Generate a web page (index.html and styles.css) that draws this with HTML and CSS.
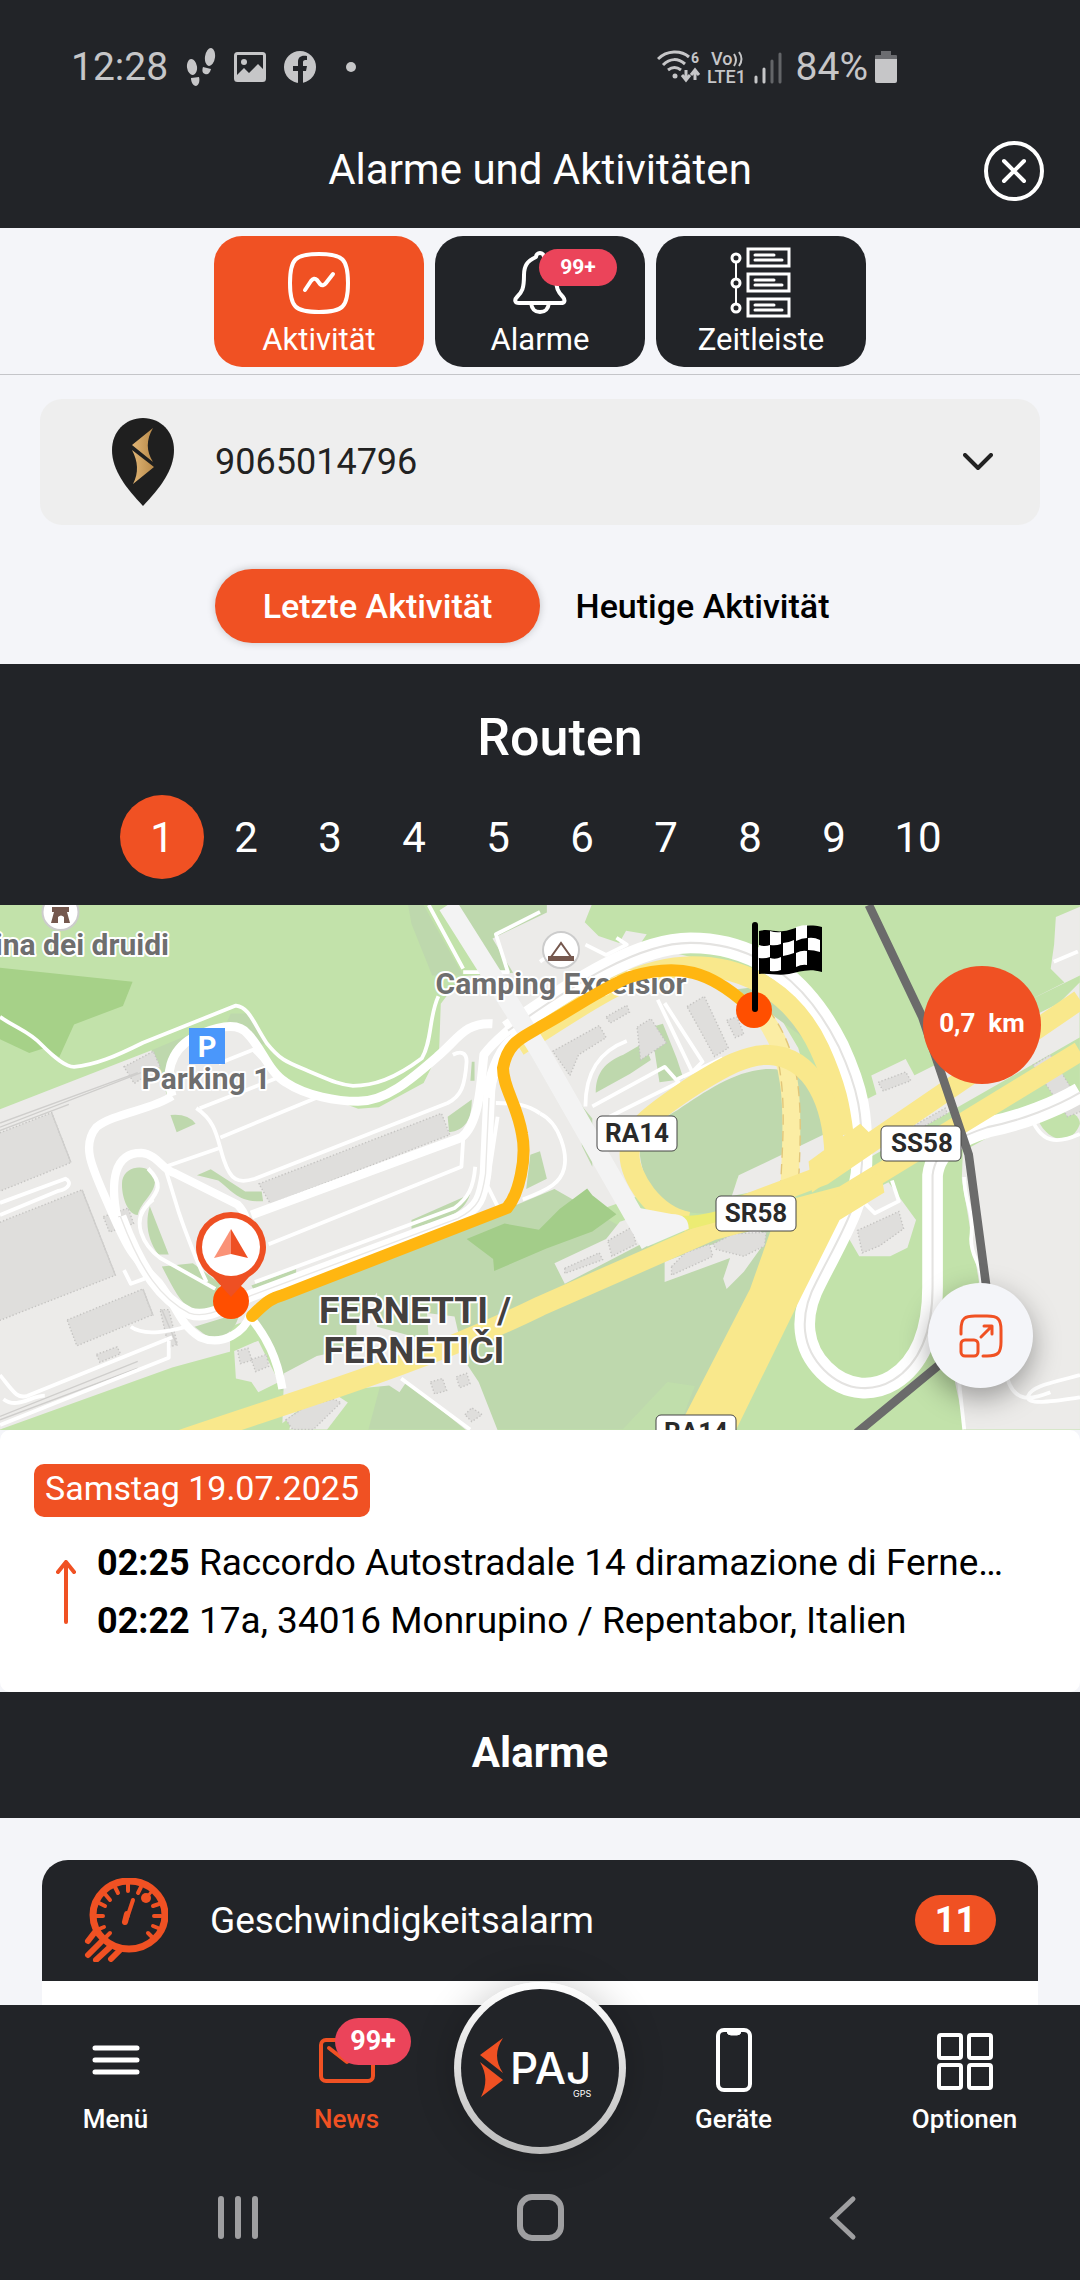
FILE: index.html
```html
<!DOCTYPE html>
<html lang="de">
<head>
<meta charset="utf-8">
<meta name="viewport" content="width=device-width, initial-scale=1">
<title>Alarme und Aktivitäten</title>
<link rel="stylesheet" href="styles.css">
</head>
<body>
<div class="status">
  <div class="status-group">
    <span class="clock">12:28</span>
    <svg class="ic-steps" viewBox="0 0 30 38" width="30" height="38" fill="currentColor"><ellipse cx="6" cy="19" rx="5" ry="8" transform="rotate(-8 6 19)"/><path d="M5 30l8-1c1 4 0 8-3 9-3 0-5-4-5-8z"/><ellipse cx="24" cy="9" rx="5" ry="9" transform="rotate(8 24 9)"/><path d="M17 19l8 2c-1 4-3 6-6 5s-3-4-2-7z"/></svg>
    <svg class="ic-photo" viewBox="0 0 32 32" width="32" height="32"><rect x="1.500" y="2.500" width="29" height="27" rx="2" fill="none" stroke="currentColor" stroke-width="3"/><circle cx="10" cy="11" r="3" fill="currentColor"/><path d="M2 30V25l8-8 5 5 9-9 7 7v10z" fill="currentColor"/></svg>
    <svg viewBox="0 0 32 32" width="32" height="32"><circle cx="16" cy="16" r="16" fill="currentColor"/><path d="M14 32V20h-5v-5h5v-4c0-5 3-7 9-6v4c-3 0-4 0-4 3v3h4l-1 5h-3v12z" fill="#222428"/></svg>
    <span class="dot"></span>
  </div>
  <div class="status-group status-right">
    <svg viewBox="0 0 126 40" width="126" height="40">
      <g transform="translate(0 3)">
      <g fill="none" stroke="currentColor" stroke-width="3"><path d="M1 9C10 0 24 0 32 7M6 15c7-7 15-7 22-1M11 20c4-3 9-3 13 0"/><path d="M29 20v9m-4-4l4 5 4-5M38 30v-9m-4 4l4-5 4 5" stroke-width="3"/></g>
      <circle cx="18" cy="26" r="2.500" fill="currentColor"/>
      <text class="tiny" x="34" y="13">6</text>
      <text class="micro" x="54" y="15">Vo</text><text class="micro" x="50" y="33">LTE1</text>
      <path d="M77 4q4 6 0 12M82 2q5 7 0 14" fill="none" stroke="currentColor" stroke-width="2"/>
      <g stroke="currentColor" stroke-width="3" stroke-linecap="round"><path d="M99 27v5M107 19v13"/><path d="M115 11v21M123 4v28" opacity=".4"/></g>
      </g>
    </svg>
    <span class="clock">84%</span>
    <svg viewBox="0 0 22 34" width="22" height="34" fill="currentColor"><path d="M0 9V6q0-1 1-1h5V1h10v4h5q1 0 1 1v3z" opacity=".45"/><path d="M0 9h22v22q0 2-2 2H2q-2 0-2-2z"/></svg>
  </div>
</div>

<header class="header">
  <h1>Alarme und Aktivitäten</h1>
  <button class="close" aria-label="Schließen"><svg viewBox="0 0 60 60" width="60" height="60" fill="none" stroke="currentColor" stroke-linecap="round"><circle cx="30" cy="30" r="28" stroke-width="4"/><path d="M20 20l20 20M40 20L20 40" stroke-width="4"/></svg></button>
</header>

<main class="main">
  <div class="tabs">
    <button class="tab active">
      <svg viewBox="0 0 72 72" width="72" height="72" fill="none" stroke="currentColor" stroke-width="4" stroke-linecap="round" stroke-linejoin="round"><path d="M7 36C7 12 12 7 36 7s29 5 29 29-5 29-29 29S7 60 7 36z"/><path d="M22 43l6-9q3-4 6-1l3 4q3 3 6-1l7-9"/></svg>
      <span>Aktivität</span>
    </button>
    <button class="tab">
      <svg viewBox="0 0 72 72" width="72" height="72" fill="none" stroke="currentColor" stroke-width="4" stroke-linejoin="round"><path d="M32 10a4 4 0 0 1 8 0c9 4 12 9 12 18 0 14 2 17 7 22 3 4 1 6-2 6H15c-4 0-5-3-2-6 5-5 7-8 7-22 0-9 3-14 12-18z"/><path d="M27 56c1 7 4 9 9 9s8-2 9-9"/></svg>
      <span>Alarme</span>
      <span class="badge">99+</span>
    </button>
    <button class="tab">
      <svg viewBox="0 0 72 72" width="72" height="72" fill="none" stroke="currentColor" stroke-width="3"><path d="M23 2h41v17H23zM23 27h41v17H23zM23 52h41v17H23z"/><path d="M30 8h19M30 13h27M30 33h19M30 38h27M30 58h19M30 63h27" stroke-linecap="round"/><circle cx="11" cy="11" r="4"/><circle cx="11" cy="36" r="4"/><circle cx="11" cy="61" r="4"/><path d="M11 15v17M11 40v17" stroke-width="2"/></svg>
      <span>Zeitleiste</span>
    </button>
  </div>

  <div class="filters">
    <div class="device">
      <svg viewBox="0 0 64 88" width="64" height="88"><defs><linearGradient id="gold"><stop offset="0" stop-color="#e0b575"/><stop offset="1" stop-color="#b98a4a"/></linearGradient></defs><path d="M32 0C14 0 1 14 1 32c0 20 14 38 31 56 17-18 31-36 31-56C63 14 50 0 32 0z" fill="#1f1f1f"/><path d="M42 10L21 27l21 17c-7-11-7-22 0-34z" fill="url(#gold)"/><path d="M21 32l22 17-21 17c6-11 5-23-1-34z" fill="url(#gold)"/></svg>
      <select aria-label="Gerät"><option>9065014796</option></select>
      <svg class="chevron" viewBox="0 0 30 18" width="30" height="18" fill="none" stroke="#222" stroke-width="4" stroke-linecap="round" stroke-linejoin="round"><path d="M2 2l13 13L28 2"/></svg>
    </div>
    <div class="segment">
      <button class="seg on">Letzte Aktivität</button>
      <button class="seg">Heutige Aktivität</button>
    </div>
  </div>

  <section class="routes">
    <h2>Routen</h2>
    <div class="pages">
      <button class="page on">1</button><button class="page">2</button><button class="page">3</button><button class="page">4</button><button class="page">5</button><button class="page">6</button><button class="page">7</button><button class="page">8</button><button class="page">9</button><button class="page">10</button>
    </div>
  </section>

  <section class="map">
    <svg class="map-art" viewBox="0 0 1080 525" preserveAspectRatio="xMidYMid slice">
      <g transform="scale(.34437) translate(0 -15)">
        <rect y="15" width="3136" height="1530" fill="#c2e2aa"/>
        <path d="M1185 15l10 55 60 150h90L1230 15zM1320 15h300v200h-200zM670 330h50l60 90-150 0zM440 437l120-50 0 60-80 120z" fill="#bed8ad"/>
        <path d="M0 197l385 41-28 70-142 54-43 95-42-27-45 15-85-40z" fill="#a6d188"/>
        <!-- built-up land -->
        <path d="M0 608L440 437l45 130 20-120 60-60 110-30 60 40 90 130 215 80 60-5 130-70 45-90 5-140 60-80 150-10-60-100 158-75V15h130l-20 50 40 40 60 20 20-35 60 10-20 30 330 80 130 220 60 220-300 130-560 200-90-30-760 290v100l-210 70-30 30L0 1538z" fill="#ecebe9"/>
        <!-- lower woodland -->
        <path d="M735 1215l65-65 690-260 120-50 300 170 340-130-40 240-220 418H1070l-20-100-230 20-20-120z" fill="#bed8ad"/>
        <path d="M1070 1538l40-150-310 40-80-130-220 60L0 1538z" fill="#c2e2aa"/>
        <path d="M1808 1538l130-138 80 12-50 126z" fill="#c2e2aa" opacity=".6"/>
        <path d="M1355 985l110-45 100 18 60-60 80-60 15 20 70 55-70 50-135 50-150 65-3-35z" fill="#a3cd89"/>
        <path d="M680 1310l70-30 60 120-60 30-20-30-45-10zM825 1375l95-50 115-25V1220l60-80v100l150 40-5-80 80 10 30 130 40 60 60 153h-80L1180 1400l-20 30-30-20-200 20-110 90z" fill="#ecebe9"/>
        <path d="M850 1500l80-50 50-10 30 20-60 78h-110z" fill="#ecebe9"/>
        <!-- green islands -->
        <g fill="#bed8ad">
          <path d="M495 625q50-5 73 25l-55 25zM355 815c10-50 90-50 95 0 0 40-40 60-50 100-30 0-50-60-45-100zM435 890l55 140-30 0c-30-40-40-90-25-140zM470 1065l90-10 80 60-20 70-60 5c-40-20-60-70-90-125zM572 800l40-18 100 65 48 0 4 28c-70 5-90-30-130-60zM1300 630l70-50c0 60-20 90-66 95zM1370 470l8 0 0 55-12 0zM1195 930l170-75c-20 60-70 70-170 100zM730 1120l130-48v12l-120 55zM565 1240l130-40c-10 60-60 80-90 70z"/>
          <path d="M1540 740l28-10 20 80-60 30zM1730 560c0-60 30-90 80-110l60-35 20 50-60 40zM1890 370l35-10 40 100 20 60-70 10zM1670 575l50 60 0 140-30-60zM2300 240c80 70 100 160 120 260l-100-110-180-130z"/>
        </g>
        <path d="M1858 740c0-60 40-90 110-130 120-80 260-180 400-70l30 150-170 80-90 40-10 70-60 30c-130 10-200-70-210-170z" fill="#bed8ad"/>
        <path d="M2125 860l20-60 250-120 20-50 660-330 60-60v160l-700 400z" fill="#ecebe9"/>
        <path d="M2530 510l100-48 40 75-120 45zM2480 870l100-50 80 110-25 80-50 25h-90l-35-60zM3136 20l-70 30-5 80-10 70 40 40-120 60 165-80z" fill="#ecebe9"/>
        <path d="M3136 590l-230 80-110 60-3 80 50 300-60 100-10 190 30 138h333z" fill="#ecebe9"/>
        <path d="M3015 640c60-60 121-20 121 10-20 60-90 60-121-10z" fill="#c2e2aa"/>
        <path d="M1610 1055l150-70 40-50 60-20 30 70-250 130zM1930 1050l280-100 0 60-50 70-50 50-10-30 20-60-190 70z" fill="#ecebe9"/>
        <!-- buildings -->
        <g fill="#dfdedc" stroke="#c5c4c2" stroke-width="4" stroke-dasharray="4 6">
          <path d="M-10 680l160-62 56 145L-10 850zM-10 940l248-98 97 248-345 135zM360 485l85-45 20 45-75 48zM752 825l530-205 24 62-520 202zM195 1220l220-90 28 75-220 90zM300 920l72-25 16 45-70 25zM280 1320l60-22 10 20-60 25zM465 1190l25 0 25 100-25 10zM690 1310l30-8 12 35-34 10zM730 1335l44-15 6 35-38 15zM1250 1400l35-10 12 35-35 10zM1325 1385l30-10 10 30-30 12zM1350 1495l20-20 30 20-30 20zM830 1510l60-40 80-20 20 10-80 78h-60z"/>
          <path d="M1605 440l135-75 20 35-80 50-25 60zM1760 340l60-34 8 20-56 32zM1850 370l40-25 45 70-75 50zM1995 310l50-30 70 150-40 25zM2110 350l30-10 20 50-25 10zM2550 530l80-30 15 25-80 30zM2490 960l120-55 14 50-70 50-50 20zM1640 1070l100-45 10 20-110 40zM1765 990l70-40 12 50-70 35zM1950 1065l40-40 70-25 10 35-120 55zM2070 1000l60-30 95-5-5 40-60 30-80-20zM2655 655l90-50 6 15-90 50zM3000 480l50-30 100 160-50 20z"/>
        </g>
        <!-- railway tracks -->
        <g fill="none" stroke="#cfcecc" stroke-width="4"><path d="M0 660l410-158M0 648l400-146M0 670l200-76M0 1500l400-160M0 1510l400-150M0 1525l390-155M150 618l56 145M238 842l97 248M415 1130l30 78M470 1190l45 105"/></g>
        <!-- minor streets -->
        <g fill="none" stroke="#fff" stroke-width="11" stroke-linejoin="round">
          <path d="M0 340C60 380 80 380 120 420s70 65 95 65c60-5 120-30 200-70l270-108c40 5 50 50 90 110 40 50 60 55 120 80s90 40 130 43c60 0 120-20 200-80 30-50 20-120 48-180"/>
          <path d="M1245 15l100 185M1345 210h130l-35-110 128-65M0 880l190-70c20 10 10 30-20 35L0 915"/>
          <path d="M580 605l230-90-75-80-100 40M640 690l290-120M480 775l160-55M570 605c60 40 60 90 80 150 20 60 40 70 90 55l560-220c40-20 50-50 55-120 0-30-20-30-40-20"/>
          <path d="M780 1000l560-225 5-80M740 1110l580-215c40-30 55-60 60-120M480 780l40 130c20 60 60 160 80 200M445 870c-80 60-20 140 20 170l160 90M380 1240c40 30 120 10 160 0M0 1380c40 50 50 70 80 60l420-170M10 1450c40 30 80-10 120-10M490 1280v50L0 1525M360 1075l20 40 40-15M1445 630l-30 200 30 60M1440 590c60 0 90 5 128 30"/>
          <path d="M1165 1390l200 148M1568 180l40-30M1700 130l60 30 60-30-30-20M1568 440v-5M1700 600c0-100 40-160 120-190M1720 600l210-115 40 45-200 100M1930 300l110 170-30 30-100-210M1968 520l130-60M1568 620c60 30 80 120 70 160s-40 60-120 90M2800 805c0 80 30 90 20 180 0 60 30 60 30 130M2785 1400l15 138M3136 1380c-70 20-140 30-150 60s80 15 150 5M2920 1370c20 100 80 80 130 60M2500 870l40 40 70-35-20-60M2990 620c30 90 80 90 146 60M3060 180l70-30"/>
        </g>
        <!-- truck stop roads -->
        <g fill="none" stroke="#fff" stroke-linejoin="round">
          <path d="M500 570c-20-60-10-130 60-170 60-30 130-50 160-10 40 40 60 110 110 140 60 40 150 55 210 55 80 0 150-60 230-130 60-50 80-100 160-95" stroke-width="26"/>
          <path d="M500 570c-60 40-170 50-220 90-50 60-5 130 50 260 40 90 50 110 130 190 60 80 60 120 120 160 70 30 130-20 145-60 50 60 80 120 95 210" stroke-width="24"/>
          <path d="M340 920c-20-100-10-185 70-185 50 5 60 50 100 60l180 90c20 20 40 60 20 110" stroke-width="24"/>
          <path d="M730 915L1340 690c50-40 55-140 65-240 30-40 60-60 80-80" stroke-width="26"/>
          <path d="M350 920c60 160 120 240 200 280 60 20 120-30 190-55l590-220c60-30 70-60 80-130l10-220c0-60 30-130 60-160l120-90" stroke-width="34"/>
          <path d="M430 780c60 60 10 80-20 130" stroke-width="12"/>
        </g>
        <path d="M350 920c60 160 120 240 200 280 60 20 120-30 190-55l590-220c60-30 70-60 80-130l10-220" fill="none" stroke="#e9e8e6" stroke-width="4"/>
        <path d="M1475 380c200-140 380-255 530-255 200 0 340 120 430 300 60 130 70 200 68 340-5 120-70 220-130 340-60 110-40 200 20 260 70 70 150 60 200 30 80-50 115-140 115-270V800c10-90 100-120 160-140 100-20 200-60 268-100" fill="none" stroke="#fff" stroke-width="60"/>
        <path d="M1475 380c200-140 380-255 530-255 200 0 340 120 430 300 60 130 70 200 68 340-5 120-70 220-130 340-60 110-40 200 20 260 70 70 150 60 200 30 80-50 115-140 115-270V800c10-90 100-120 160-140 100-20 200-60 268-100" fill="none" stroke="#e4e3e1" stroke-width="6"/>
        <path d="M2208 330c100 120 95 270 85 490" fill="none" stroke="#fbeda4" stroke-width="52"/>
        <path d="M2232 320c100 130 97 280 87 500M2262 480c18 100 13 200 5 340" fill="none" stroke="#e2c67a" stroke-width="4" stroke-dasharray="30 18"/>
        <!-- highways -->
        <g fill="none" stroke="#f9e88c" stroke-width="58">
          <path d="M1505 425c200-125 330-230 505-232 170 0 300 90 370 240 50 110 60 170 70 250"/>
          <path d="M1998 935c-100-20-170-130-170-195 0-80 70-120 170-190 110-70 170-100 230-100 140 5 190 150 195 290"/>
          <path d="M520 1570c350-120 700-220 1048-390l500-220 380-100 688-420"/>
          <path d="M2150 890l240-90 746-510"/>
        </g>
        <path d="M2178 1130l60-170 120-60 200-110 10 60-130 80-110 220-190 388h-170z" fill="#f9e88c"/>
        <path d="M2348 760l150-110 60 60-200 140z" fill="#f9e88c"/>
        <path d="M1960 915c60 10 110-10 160-20v30l-150 40z" fill="#ecec73"/>
        <path d="M1300 15l268 425 320 560" fill="none" stroke="#f3f3f3" stroke-width="56"/>
        <path d="M1830 890l120 22q50 0 50 43l-120 52z" fill="#f3f3f3"/>
        <g fill="none" stroke="#6b6b6b" stroke-width="25"><path d="M2523 15l155 325 135 400 50 375v200l-135 35-240 198"/></g>
      </g>
      <!-- places -->
      <g class="place">
        <circle cx="60.500" cy="7" r="18" fill="#fff" stroke="#ccc" stroke-width="2"/><path d="M51 18l3-11h-2V2h17v5h-2l3 11h-6v-6q-3-3-6 0v6z" fill="#75584e"/>
        <circle cx="561" cy="45" r="18" fill="#fff" stroke="#ccc" stroke-width="2"/><path d="M551 52l10-14 10 14" fill="none" stroke="#75584e" stroke-width="2"/><path d="M548 51h26v5h-26z" fill="#75584e"/>
        <rect x="189" y="123" width="36" height="36" fill="#4a97fb"/>
        <text class="poi-p" x="207" y="152">P</text>
        <text class="poi end" x="169" y="50">ina dei druidi</text>
        <text class="poi" x="206" y="184">Parking 1</text>
        <text class="poi" x="561" y="89">Camping Excelsior</text>
      </g>
      <path d="M252 411c15-15 20-18 31-21l224-87c12-14 20-50 15-74-5-30-19-46-19-66 5-27 20-30 37-41 40-22 60-38 90-50 50-15 80-5 116 27" fill="none" stroke="#ffb611" stroke-width="12" stroke-linecap="round" stroke-linejoin="round"/>
      <g class="place">
        <text class="town" x="415" y="418">FERNETTI /</text>
        <text class="town" x="414" y="458">FERNETIČI</text>
      </g>
      <g class="sign">
        <rect x="597" y="211" width="80" height="35" rx="5"/><text x="637" y="237">RA14</text>
        <rect x="881" y="221" width="80" height="35" rx="5"/><text x="922" y="247">SS58</text>
        <rect x="716" y="291" width="80" height="35" rx="5"/><text x="756" y="317">SR58</text>
        <rect x="656" y="510" width="80" height="35" rx="5"/><text x="696" y="536">RA14</text>
      </g>
      <!-- start marker -->
      <circle cx="231" cy="396" r="18" fill="#ff4f00"/>
      <path d="M231 392l-18-20a35 35 0 1 1 36 0z" fill="#ee5023"/>
      <circle cx="231" cy="342" r="29" fill="#fff"/>
      <path d="M231 324l-17 29 17-4z" fill="#fa9277"/><path d="M231 324l17 29-17-4z" fill="#ee5023"/>
      <!-- finish marker -->
      <circle cx="754" cy="105" r="18" fill="#ff4f00"/>
      <path d="M759 26c12-3 16 3 30-1 12-4 20-6 33-3v45c-14-4-22 0-33 2-12 2-18-1-30 0z" fill="#000"/>
      <path d="M770 26q6 2 11 1v12q-5 2-11 1zM796 22q6-2 11-2v13q-5 0-11 3zM759 40q6 2 11 0v12q-5 2-11 1zM783 38q5 0 11-3v13q-5 2-11 3zM808 33q6-1 12 2v12q-6-2-12-2zM770 53q6 2 11-1v13q-5 2-11 1zM796 48q6-3 11-2v14q-5-1-11 2z" fill="#fff"/>
      <path d="M755 20v84" stroke="#000" stroke-width="6" stroke-linecap="round"/>
    </svg>
    <div class="km">0,7 &nbsp;km</div>
    <button class="expand" aria-label="Karte vergrößern"><svg viewBox="0 0 44 44" width="44" height="44" fill="none" stroke="currentColor" stroke-width="3" stroke-linecap="round" stroke-linejoin="round"><path d="M2 20v-4C2 4 6 2 16 2h12c11 0 14 3 14 14v12c0 11-3 14-14 14h-4"/><rect x="2" y="26" width="17" height="16" rx="4"/><path d="M22 23l11-11M25 12h8v8"/></svg></button>
  </section>

  <section class="trip">
    <span class="date">Samstag 19.07.2025</span>
    <div class="legs">
      <svg viewBox="0 0 20 64" width="20" height="64" fill="none" stroke="#f05123" stroke-width="4" stroke-linecap="round" stroke-linejoin="round"><path d="M10 62V2M2 12l8-10 8 10"/></svg>
      <div class="leg-list">
        <p><b>02:25</b> Raccordo Autostradale 14 diramazione di Fernetti, Monrupino</p>
        <p><b>02:22</b> 17a, 34016 Monrupino / Repentabor, Italien</p>
      </div>
    </div>
  </section>

  <h2 class="bar">Alarme</h2>

  <section class="alarm">
    <div class="alarm-head">
      <svg viewBox="0 0 84 84" width="84" height="84" fill="none" stroke="#f05123" stroke-linecap="round"><ellipse cx="45" cy="37" rx="36" ry="34" stroke-width="7"/><path d="M44 6v7M31 9l3 6M57 9l-3 6M21 16l5 6M15 25l6 3M12 38h7M15 51l5-2M21 60l5-5M69 60l-5-5M74 50l-5-2M77 38h-7M75 26l-6 2" stroke-width="4"/><path d="M49 22l-6 18" stroke-width="4"/><path d="M43 36l-2 8" stroke-width="6"/><circle cx="62" cy="20" r="5" fill="#f05123" stroke="none"/><path d="M63 19l5-6" stroke-width="3"/><path d="M11 54l-7 9M17 64L4 77M26 69L12 82M36 72l-9 9" stroke-width="6"/></svg>
      <span class="alarm-name">Geschwindigkeitsalarm</span>
      <span class="count">11</span>
    </div>
    <div class="alarm-body"></div>
  </section>
</main>

<footer class="footer">
  <nav class="nav">
    <a href="#menu"><svg viewBox="0 0 64 64" width="64" height="64" stroke="currentColor" stroke-width="5" stroke-linecap="round"><path d="M11 20h42M11 32h42M11 44h42"/></svg><span>Menü</span></a>
    <a href="#news" class="current"><svg viewBox="0 0 64 64" width="64" height="64" fill="none" stroke="currentColor" stroke-width="4" stroke-linecap="round" stroke-linejoin="round"><rect x="6" y="12" width="52" height="41" rx="5"/><path d="M14 20l18 14 18-14"/></svg><span>News</span><span class="badge">99+</span></a>
    <a href="#home" class="home" aria-label="PAJ GPS">
      <svg viewBox="0 0 172 172" width="172" height="172"><path d="M49 56L26 73l23 18c-8-12-8-23 0-35z" fill="#f05123"/><path d="M26 80l23 18-22 17c6-12 6-23-1-35z" fill="#f05123"/><text class="paj" x="56" y="102">PAJ</text><text class="gps" x="119" y="115">GPS</text></svg>
    </a>
    <a href="#devices"><svg viewBox="0 0 64 64" width="64" height="64" fill="none" stroke="currentColor" stroke-width="4"><rect x="16" y="2" width="32" height="60" rx="6"/><path d="M25 3h14q0 4-4 4h-6q-4 0-4-4z" fill="currentColor" stroke-width="1"/></svg><span>Geräte</span></a>
    <a href="#options"><svg viewBox="0 0 64 64" width="64" height="64" fill="none" stroke="currentColor" stroke-width="4"><rect x="6" y="7" width="22" height="23" rx="2"/><rect x="36" y="7" width="22" height="23" rx="2"/><rect x="6" y="37" width="22" height="23" rx="2"/><rect x="36" y="37" width="22" height="23" rx="2"/></svg><span>Optionen</span></a>
  </nav>
  <div class="system">
    <button aria-label="Letzte Apps"><svg viewBox="0 0 48 48" width="48" height="48" stroke="currentColor" stroke-width="6" stroke-linecap="round"><path d="M7 5v37M24 5v37M41 5v37"/></svg></button>
    <button aria-label="Startseite"><svg viewBox="0 0 48 48" width="48" height="48" fill="none" stroke="currentColor" stroke-width="6"><rect x="4" y="3" width="41" height="41" rx="12"/></svg></button>
    <button aria-label="Zurück"><svg viewBox="0 0 48 48" width="48" height="48" fill="none" stroke="currentColor" stroke-width="5" stroke-linecap="round"><path d="M35 5L15 24l20 19"/></svg></button>
  </div>
</footer>
</body>
</html>
```
FILE: styles.css
```css
:root {
  --dark: #222428;
  --light: #f4f5f9;
  --orange: #f05123;
  --red: #eb445a;
}
* { box-sizing: border-box; }
body {
  margin: 0;
  min-height: 100vh;
  display: flex;
  flex-direction: column;
  background: var(--light);
  color: #000;
  font-family: Roboto, "Noto Sans", sans-serif;
  font-size: 36px;
}
h1, h2, p { margin: 0; }
svg { display: block; flex: none; }
button, select {
  font: inherit;
  color: inherit;
  border: 0;
  background: none;
  padding: 0;
  margin: 0;
}
a { color: inherit; text-decoration: none; }

.status {
  display: flex;
  justify-content: space-between;
  align-items: center;
  background: var(--dark);
  color: #c6c6c8;
  padding: 44px 183px 0 71px;
}
.status-group { display: flex; align-items: center; gap: 18px; }
.status-right { gap: 7px; }
.status-right .clock { padding-left: 6px; }
.clock { font-size: 39px; line-height: 46px; }
.dot { width: 10px; height: 10px; margin-left: 12px; border-radius: 50%; background: currentColor; }
.tiny { font-size: 14px; font-weight: 700; fill: currentColor; }
.micro { font-size: 18px; font-weight: 500; fill: currentColor; }

.header {
  display: grid;
  grid-template-columns: 60px 1fr 60px;
  align-items: center;
  background: var(--dark);
  color: #fff;
  padding: 51px 36px 27px;
}
.header h1 { grid-column: 2; text-align: center; font-size: 42px; line-height: 58px; padding-bottom: 2px; font-weight: 400; }
.close { height: 60px; }

.main { flex: 1; display: flex; flex-direction: column; }

.tabs {
  display: flex;
  justify-content: center;
  gap: 11px;
  padding: 8px 0 7px;
  border-bottom: 1px solid #c4c5c9;
}
.tab {
  position: relative;
  display: flex;
  flex-direction: column;
  align-items: center;
  gap: 1px;
  width: 210px;
  padding: 11px 0 8px;
  border-radius: 28px;
  background: var(--dark);
  color: #fff;
  font-size: 31px;
  line-height: 39px;
}
.tab.active { background: var(--orange); }
.badge {
  position: absolute;
  background: var(--red);
  color: #fff;
  font-weight: 700;
  border-radius: 24px;
  text-align: center;
}
.tab .badge { left: 104px; top: 13px; width: 78px; font-size: 21px; line-height: 37px; }

.filters { padding: 24px 40px 21px; }
.device {
  display: flex;
  align-items: center;
  position: relative;
  background: #eee;
  border-radius: 22px;
  padding: 19px 47px 19px 71px;
  color: #222;
}
.device select {
  appearance: none;
  flex: 1;
  min-width: 0;
  height: 88px;
  padding-left: 40px;
  font-size: 36px;
}
.segment {
  display: grid;
  grid-template-columns: 1fr 1fr;
  max-width: 650px;
  margin: 44px auto 0;
}
.seg { font-size: 34px; font-weight: 500; line-height: 74px; border-radius: 37px; }
.seg.on {
  background: var(--orange);
  color: #fff;
  box-shadow: 0 0 8px rgba(0, 0, 0, .2);
}

.routes { background: var(--dark); color: #fff; padding: 42px 0 26px; }
.routes h2 { font-size: 52px; line-height: 64px; font-weight: 500; text-align: center; padding-left: 40px; }
.pages { display: flex; justify-content: center; padding-top: 25px; }
.page { width: 84px; height: 84px; border-radius: 50%; font-size: 42px; }
.page.on { background: var(--orange); }

.map { position: relative; }
.map-art { width: 100%; aspect-ratio: 1080 / 525; }
.place text { text-anchor: middle; font-weight: 700; fill: #6e6e6e; stroke: #fff; stroke-width: 4px; stroke-linejoin: round; paint-order: stroke; }
.place .poi { font-size: 30px; }
.place .end { text-anchor: end; }
.place .poi-p { font-size: 29px; fill: #fff; stroke: none; }
.place .town { font-size: 37px; fill: #43403f; }
.sign rect { fill: #fff; stroke: #444; stroke-width: 1px; }
.sign text { font-size: 26px; font-weight: 700; text-anchor: middle; fill: #2a2a2a; }
.km {
  position: absolute;
  right: 39px;
  top: 61px;
  width: 118px;
  height: 118px;
  border-radius: 50%;
  background: var(--orange);
  color: #fff;
  text-align: center;
  font-size: 26px;
  font-weight: 700;
  line-height: 114px;
}
.expand {
  position: absolute;
  right: 47px;
  bottom: 42px;
  display: grid;
  place-items: center;
  width: 105px;
  height: 105px;
  border-radius: 50%;
  background: var(--light);
  color: var(--orange);
  box-shadow: 0 10px 28px rgba(0, 0, 0, .35);
}

.trip { background: #fff; border-radius: 10px; padding: 34px 76px 42px 34px; }
.date {
  display: inline-block;
  vertical-align: top;
  background: var(--orange);
  color: #fff;
  border-radius: 10px;
  padding: 0 11px 5px;
  font-size: 34px;
  line-height: 48px;
}
.legs { display: flex; align-items: center; gap: 21px; padding: 17px 0 0 22px; }
.leg-list { flex: 1; min-width: 0; }
.leg-list p {
  font-size: 37px;
  line-height: 58px;
  white-space: nowrap;
  overflow: hidden;
  text-overflow: ellipsis;
}
.leg-list b { font-size: 36px; }

.bar {
  background: var(--dark);
  color: #fff;
  text-align: center;
  font-size: 42px;
  line-height: 122px;
  padding-bottom: 4px;
}

.alarm { flex: 1; display: flex; flex-direction: column; padding: 42px 42px 0; }
.alarm-head {
  display: flex;
  align-items: center;
  background: var(--dark);
  color: #fff;
  border-radius: 26px 26px 0 0;
  padding: 18px 42px 19px;
}
.alarm-name { flex: 1; padding-left: 42px; font-size: 37px; }
.count {
  width: 81px;
  border-radius: 25px;
  background: var(--orange);
  text-align: center;
  font-size: 36px;
  font-weight: 700;
  line-height: 50px;
}
.alarm-body { flex: 1; min-height: 24px; background: #fff; }

.footer { position: sticky; bottom: 0; background: var(--dark); color: #fff; }
.nav { display: grid; grid-template: 149px / 1fr 1fr 156px 1fr 1fr; }
.nav a {
  position: relative;
  display: flex;
  flex-direction: column;
  align-items: center;
  padding-top: 23px;
  font-size: 26px;
  font-weight: 500;
  line-height: 32px;
}
.nav a > span:not(.badge) { padding-top: 11px; }
.nav a.current { color: var(--orange); }
.nav .badge { left: 104px; top: 13px; width: 76px; font-size: 27px; line-height: 47px; }
.nav a.home {
  align-self: end;
  justify-self: center;
  width: 172px;
  height: 172px;
  padding: 0;
  border: 7px solid transparent;
  border-radius: 50%;
  justify-content: center;
  background: linear-gradient(var(--dark), var(--dark)) padding-box, linear-gradient(#fff, #bbb) border-box;
  box-shadow: 0 0 40px rgba(0, 0, 0, .2);
}
.paj { font-family: Inter, sans-serif; font-size: 44px; font-weight: 500; fill: #fff; }
.gps { font-family: Inter, sans-serif; font-size: 9px; font-weight: 400; fill: #fff; }

.system { display: flex; justify-content: space-around; padding: 40px 87px 38px; color: #9f9fa1; }
.system svg { margin: auto; }
```
